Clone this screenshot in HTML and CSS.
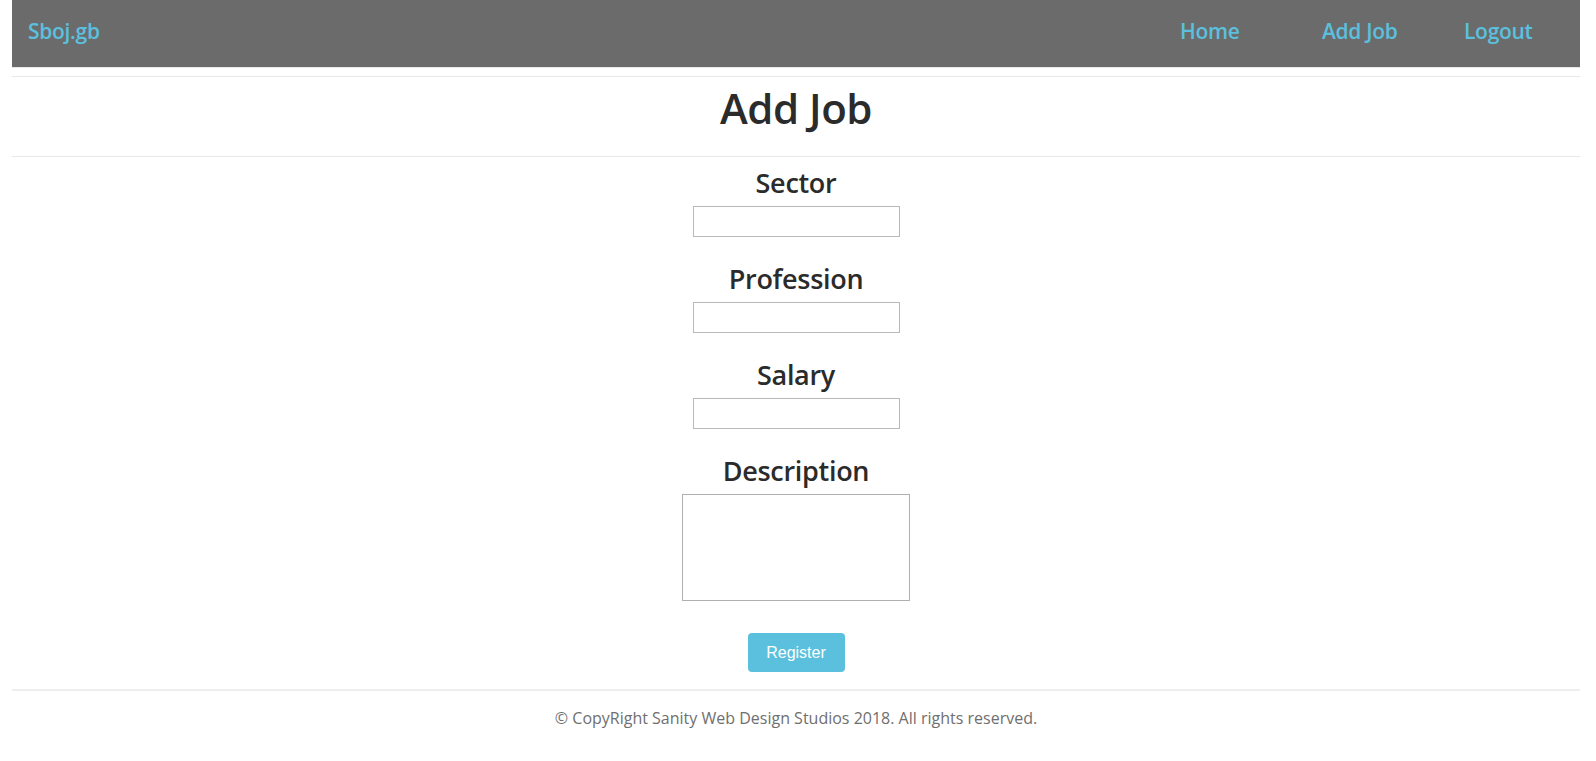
FILE: index.html
```html
<!DOCTYPE html>
<html lang="en">
<head>
<meta charset="utf-8">
<title>Add Job - Sboj.gb</title>
<link rel="stylesheet" href="styles.css">
</head>
<body>
<div class="page">
  <nav class="navbar">
    <a class="brand" href="#">Sboj.gb</a>
    <ul class="nav-links">
      <li><a href="#">Home</a></li>
      <li><a href="#">Add Job</a></li>
      <li><a href="#">Logout</a></li>
    </ul>
  </nav>
  <header class="title-bar">
    <h1>Add Job</h1>
  </header>
  <form class="job-form">
    <div class="field">
      <label for="sector">Sector</label>
      <input id="sector" type="text">
    </div>
    <div class="field">
      <label for="profession">Profession</label>
      <input id="profession" type="text">
    </div>
    <div class="field">
      <label for="salary">Salary</label>
      <input id="salary" type="text">
    </div>
    <div class="field">
      <label for="description">Description</label>
      <textarea id="description"></textarea>
    </div>
    <button type="submit" class="btn-register">Register</button>
  </form>
  <footer class="footer">
    <p>&copy; CopyRight Sanity Web Design Studios 2018. All rights reserved.</p>
  </footer>
</div>
</body>
</html>
```

FILE: styles.css
```css
html, body {
  margin: 0;
  padding: 0;
  background: #fff;
}

body {
  font-family: "Open Sans", "Noto Sans", sans-serif;
  color: #2b2b2b;
}

.page {
  margin: 0 16px 0 12px;
}

.navbar {
  display: flex;
  align-items: center;
  justify-content: space-between;
  box-sizing: border-box;
  height: 68px;
  background: #6b6b6b;
  padding: 0 16px 5px 16px;
  border-bottom: 1px solid #e8e8e8;
}

.brand,
.nav-links a {
  color: #5bc0de;
  text-decoration: none;
  font-size: 21px;
  font-weight: 600;
  letter-spacing: -0.3px;
}

.nav-links {
  display: flex;
  list-style: none;
  margin: 0;
  padding: 0;
}

.nav-links li {
  width: 100px;
  margin-left: 42px;
}

.title-bar {
  margin-top: 8px;
  border-top: 1px solid #e8e8e8;
  border-bottom: 1px solid #e8e8e8;
  height: 79px;
  text-align: center;
}

.title-bar h1 {
  margin: 0;
  padding-top: 6px;
  font-size: 42px;
  line-height: 50px;
  font-weight: 600;
  color: #2b2b2b;
  letter-spacing: -0.5px;
}

.job-form {
  display: flex;
  flex-direction: column;
  align-items: center;
  padding-top: 9px;
}

.field {
  display: flex;
  flex-direction: column;
  align-items: center;
  margin-bottom: 25px;
}

.field label {
  font-size: 27px;
  line-height: 34px;
  font-weight: 600;
  color: #2b2b2b;
  margin-bottom: 6px;
  letter-spacing: -0.3px;
}

.field input {
  box-sizing: border-box;
  width: 207px;
  height: 31px;
  border: 1px solid #b9b9b9;
  padding: 2px 4px;
  margin: 0;
}

.field textarea {
  box-sizing: border-box;
  width: 228px;
  height: 107px;
  border: 1px solid #b0b0b0;
  margin: 0;
  resize: none;
}

.btn-register {
  margin-top: 7px;
  width: 97px;
  height: 39px;
  background: #5bc0de;
  color: #fff;
  border: none;
  border-radius: 4px;
  font-family: "Liberation Sans", Arial, sans-serif;
  font-size: 16px;
}

.footer {
  margin-top: 17px;
  border-top: 2px solid #eeeeee;
  text-align: center;
}

.footer p {
  margin: 0;
  padding-top: 16px;
  font-size: 16px;
  line-height: 22px;
  color: #6f6f6f;
}
```
